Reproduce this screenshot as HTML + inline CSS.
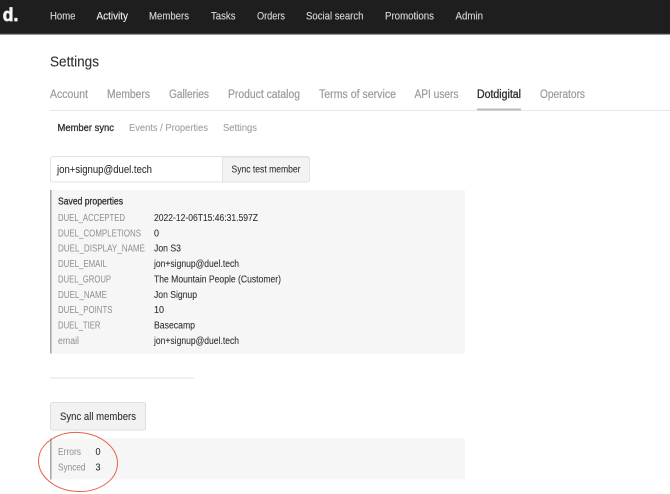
<!DOCTYPE html>
<html lang="en">
<head>
<meta charset="utf-8">
<title>Settings</title>
<style>
html,body{margin:0;padding:0;background:#fff;width:670px;height:494px;overflow:hidden}
svg{display:block;filter:blur(.3px)}
text{font-family:"Liberation Sans",Arial,sans-serif;font-size:10px;fill:#333}
.n{font-size:11px;fill:#d8d8d8;stroke:#d8d8d8;stroke-width:.12}
.t{font-size:11.5px;fill:#9a9a9a;stroke:#9a9a9a;stroke-width:.2}
.s{font-size:10.5px;fill:#a0a0a0;stroke:#a0a0a0;stroke-width:.1}
.l{font-size:10px;fill:#8f8f8f}
.v{font-size:10px;fill:#2e2e2e;stroke:#2e2e2e;stroke-width:.08}
</style>
</head>
<body>
<svg xmlns="http://www.w3.org/2000/svg" width="670" height="494" viewBox="0 0 670 494">
<rect width="670" height="494" fill="#fff"/>
<rect width="670" height="34" fill="#1e1e1e"/>
<rect y="33.6" width="670" height="1" fill="#555"/>
<text x="2.8" y="20.8" textLength="15.5" lengthAdjust="spacingAndGlyphs" style="font-size:18px;font-weight:700;fill:#f6f6f6;stroke:#f6f6f6;stroke-width:.7">d.</text>
<text class="n" x="50" y="19.5" textLength="25.5" lengthAdjust="spacingAndGlyphs">Home</text>
<text class="n" x="96.5" y="19.5" textLength="31.5" lengthAdjust="spacingAndGlyphs" style="fill:#f5f5f5;stroke:#f5f5f5">Activity</text>
<text class="n" x="149" y="19.5" textLength="40" lengthAdjust="spacingAndGlyphs">Members</text>
<text class="n" x="211" y="19.5" textLength="24.5" lengthAdjust="spacingAndGlyphs">Tasks</text>
<text class="n" x="257" y="19.5" textLength="28" lengthAdjust="spacingAndGlyphs">Orders</text>
<text class="n" x="306" y="19.5" textLength="57.5" lengthAdjust="spacingAndGlyphs">Social search</text>
<text class="n" x="385" y="19.5" textLength="49" lengthAdjust="spacingAndGlyphs">Promotions</text>
<text class="n" x="455.5" y="19.5" textLength="27.5" lengthAdjust="spacingAndGlyphs">Admin</text>

<text x="50" y="66.5" textLength="49" lengthAdjust="spacingAndGlyphs" style="font-size:14.5px;fill:#2e2e2e;stroke:#2e2e2e;stroke-width:.1">Settings</text>

<text class="t" x="50" y="98" textLength="38" lengthAdjust="spacingAndGlyphs">Account</text>
<text class="t" x="107" y="98" textLength="43" lengthAdjust="spacingAndGlyphs">Members</text>
<text class="t" x="169" y="98" textLength="40" lengthAdjust="spacingAndGlyphs">Galleries</text>
<text class="t" x="228" y="98" textLength="72" lengthAdjust="spacingAndGlyphs">Product catalog</text>
<text class="t" x="319" y="98" textLength="77" lengthAdjust="spacingAndGlyphs">Terms of service</text>
<text class="t" x="414.5" y="98" textLength="44" lengthAdjust="spacingAndGlyphs">API users</text>
<text class="t" x="477" y="98" textLength="44" lengthAdjust="spacingAndGlyphs" style="fill:#2e2e2e;stroke:#2e2e2e;stroke-width:.3">Dotdigital</text>
<text class="t" x="540" y="98" textLength="45" lengthAdjust="spacingAndGlyphs">Operators</text>
<rect x="50" y="110" width="620" height="1" fill="#e8e8e8"/>
<rect x="477" y="108.5" width="44" height="2" fill="#bbb"/>

<text class="s" x="57.5" y="131" textLength="56.5" lengthAdjust="spacingAndGlyphs" style="fill:#2e2e2e;stroke:#2e2e2e;stroke-width:.3">Member sync</text>
<text class="s" x="129" y="131" textLength="79" lengthAdjust="spacingAndGlyphs">Events / Properties</text>
<text class="s" x="223" y="131" textLength="34" lengthAdjust="spacingAndGlyphs">Settings</text>

<rect x="50.5" y="156.5" width="259" height="25.5" rx="2" fill="#fff" stroke="#e2e2e2"/>
<path d="M222.5 157h85a2 2 0 0 1 2 2v21a2 2 0 0 1-2 2h-85z" fill="#f3f3f3" stroke="#e2e2e2"/>
<text x="57" y="173" textLength="95" lengthAdjust="spacingAndGlyphs" style="font-size:11px;fill:#2e2e2e;stroke:#2e2e2e;stroke-width:.08">jon+signup@duel.tech</text>
<text x="231.5" y="172.5" textLength="69" lengthAdjust="spacingAndGlyphs" style="font-size:10px;fill:#2e2e2e;stroke:#2e2e2e;stroke-width:.08">Sync test member</text>

<rect x="50" y="190" width="415" height="163.5" fill="#f6f6f6"/>
<rect x="50" y="190" width="1.6" height="163.5" fill="#a8a8a8"/>
<text x="58" y="204.5" textLength="65" lengthAdjust="spacingAndGlyphs" style="font-size:10px;fill:#2e2e2e;stroke:#2e2e2e;stroke-width:.28">Saved properties</text>

<text class="l" x="58" y="221" textLength="67" lengthAdjust="spacingAndGlyphs">DUEL_ACCEPTED</text>
<text class="v" x="154" y="221" textLength="104" lengthAdjust="spacingAndGlyphs">2022-12-06T15:46:31.597Z</text>
<text class="l" x="58" y="236.5" textLength="83" lengthAdjust="spacingAndGlyphs">DUEL_COMPLETIONS</text>
<text class="v" x="154" y="236.5" textLength="5" lengthAdjust="spacingAndGlyphs">0</text>
<text class="l" x="58" y="251.5" textLength="87" lengthAdjust="spacingAndGlyphs">DUEL_DISPLAY_NAME</text>
<text class="v" x="154" y="251.5" textLength="27" lengthAdjust="spacingAndGlyphs">Jon S3</text>
<text class="l" x="58" y="267" textLength="49" lengthAdjust="spacingAndGlyphs">DUEL_EMAIL</text>
<text class="v" x="154" y="267" textLength="85" lengthAdjust="spacingAndGlyphs">jon+signup@duel.tech</text>
<text class="l" x="58" y="282.5" textLength="53" lengthAdjust="spacingAndGlyphs">DUEL_GROUP</text>
<text class="v" x="154" y="282.5" textLength="127" lengthAdjust="spacingAndGlyphs">The Mountain People (Customer)</text>
<text class="l" x="58" y="298" textLength="49" lengthAdjust="spacingAndGlyphs">DUEL_NAME</text>
<text class="v" x="154" y="298" textLength="43" lengthAdjust="spacingAndGlyphs">Jon Signup</text>
<text class="l" x="58" y="313" textLength="54.5" lengthAdjust="spacingAndGlyphs">DUEL_POINTS</text>
<text class="v" x="154" y="313" textLength="10" lengthAdjust="spacingAndGlyphs">10</text>
<text class="l" x="58" y="328.5" textLength="42.5" lengthAdjust="spacingAndGlyphs">DUEL_TIER</text>
<text class="v" x="154" y="328.5" textLength="41" lengthAdjust="spacingAndGlyphs">Basecamp</text>
<text class="l" x="58" y="344" textLength="21" lengthAdjust="spacingAndGlyphs">email</text>
<text class="v" x="154" y="344" textLength="85" lengthAdjust="spacingAndGlyphs">jon+signup@duel.tech</text>

<rect x="50" y="377.3" width="144" height="1.2" fill="#e6e6e6"/>

<rect x="50.5" y="402.5" width="95" height="27.5" rx="2" fill="#f2f2f2" stroke="#dedede"/>
<text x="60" y="420" textLength="76" lengthAdjust="spacingAndGlyphs" style="font-size:11px;fill:#2e2e2e;stroke:#2e2e2e;stroke-width:.08">Sync all members</text>

<rect x="50" y="438.5" width="415" height="41" fill="#f6f6f6"/>
<rect x="50" y="438.5" width="1.6" height="41" fill="#a8a8a8"/>
<text class="l" x="58" y="455" textLength="23" lengthAdjust="spacingAndGlyphs">Errors</text>
<text class="v" x="95.5" y="455" textLength="5" lengthAdjust="spacingAndGlyphs">0</text>
<text class="l" x="58" y="470.5" textLength="27.5" lengthAdjust="spacingAndGlyphs">Synced</text>
<text class="v" x="95.5" y="470.5" textLength="5" lengthAdjust="spacingAndGlyphs">3</text>

<ellipse cx="78" cy="462" rx="39.5" ry="29.5" fill="none" stroke="#e8604a" stroke-width="1" transform="rotate(4 78 462)"/>
</svg>
</body>
</html>
